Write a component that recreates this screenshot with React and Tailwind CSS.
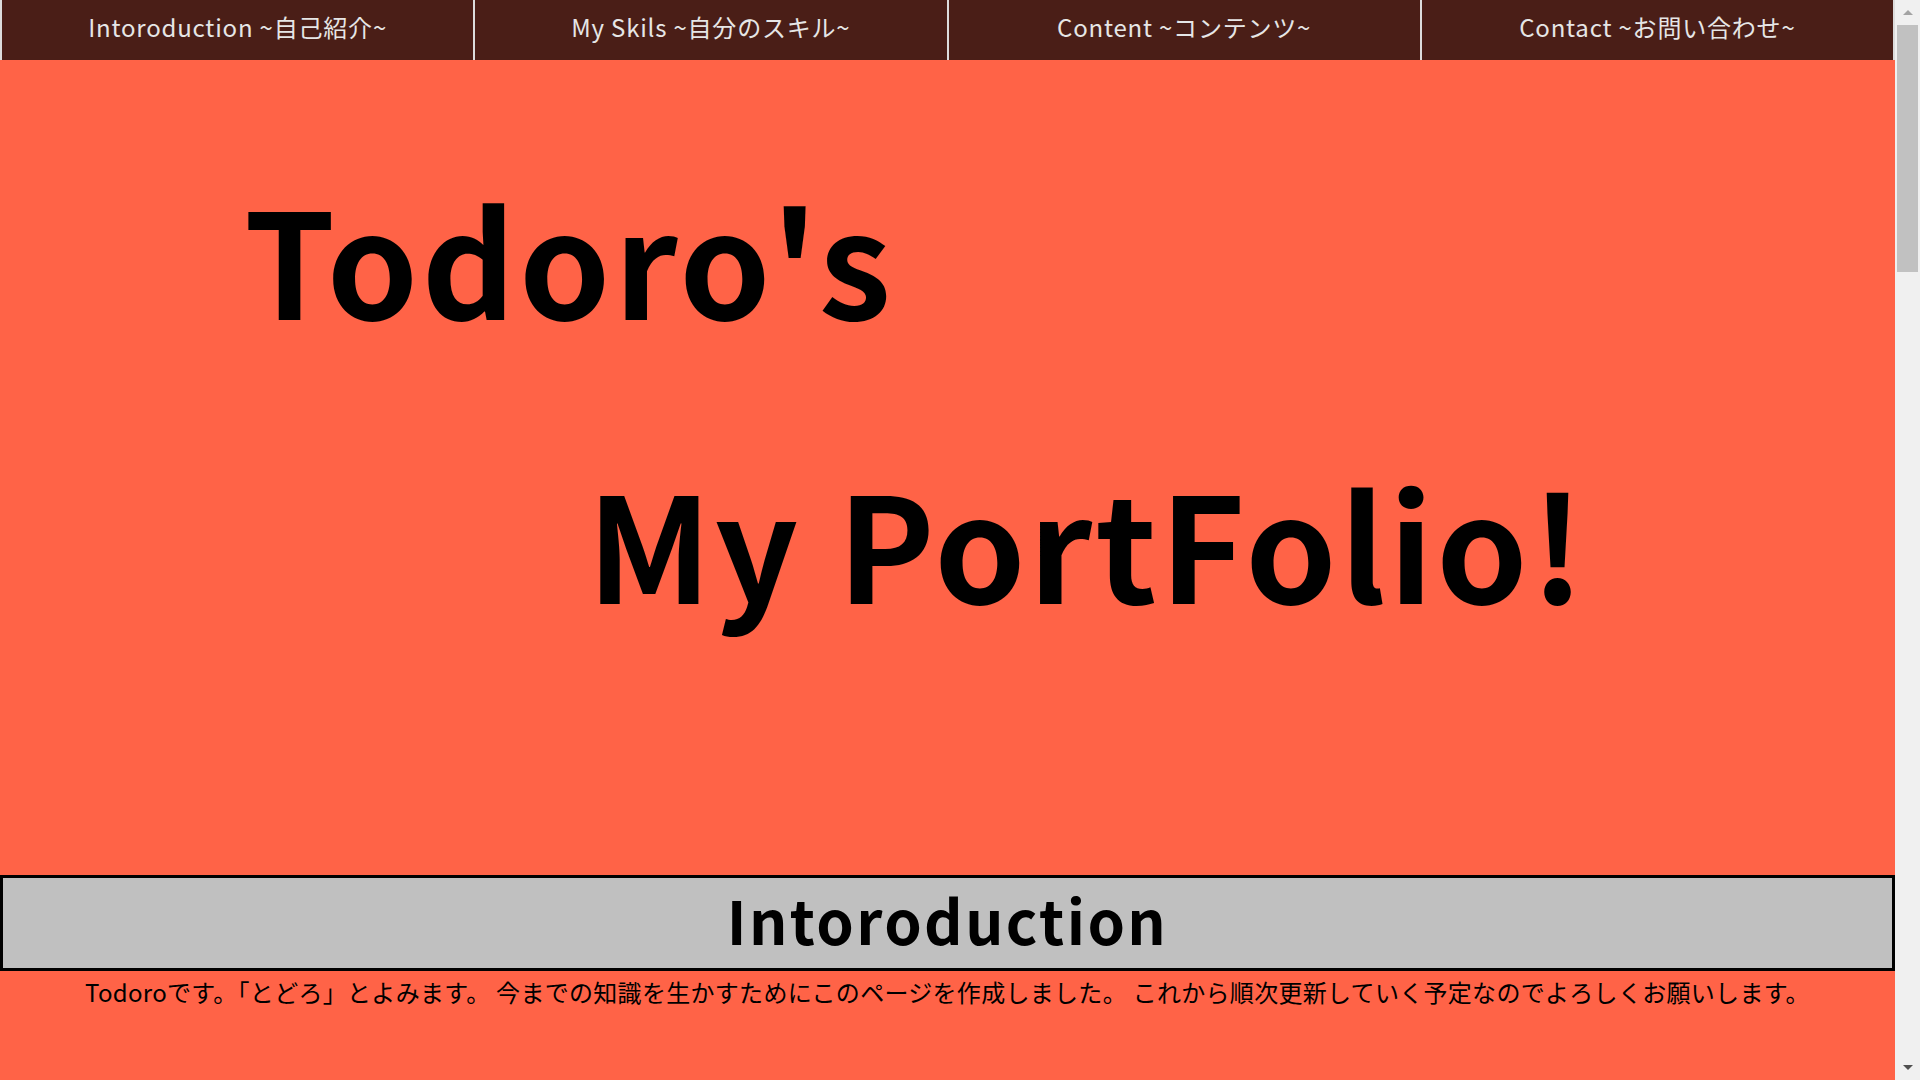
import React from "react";

const navItems = [
  "Intoroduction ~自己紹介~",
  "My Skils ~自分のスキル~",
  "Content ~コンテンツ~",
  "Contact ~お問い合わせ~",
];

export default function App() {
  return (
    <div
      className="flex h-screen w-full overflow-hidden bg-[#ff6347]"
      style={{ fontFamily: '"Noto Sans CJK JP", "Noto Sans", sans-serif' }}
    >
      <div className="flex-1 flex flex-col bg-[#ff6347] text-black">
        <nav className="flex h-[60px] bg-[#4a1e17]">
          {navItems.map((t, i) => (
            <div
              key={i}
              className={`flex-1 flex items-center justify-center border-l-2 border-[#dcdcdc] text-[24px] tracking-[0.8px] text-[#e6e6e6] pb-[6px] ${
                i === 3 ? "border-r-2" : ""
              }`}
            >
              {t}
            </div>
          ))}
        </nav>
        <section className="h-[815px] flex flex-col pt-[124px]">
          <h1 className="text-[146px] font-bold leading-none tracking-[3.5px] pl-[244px]">Todoro's</h1>
          <h1 className="text-[146px] font-bold leading-none tracking-[3px] pl-[587px] mt-[138px]">My PortFolio!</h1>
        </section>
        <h2 className="h-[96px] border-[3px] border-black bg-[#c0c0c0] flex items-center justify-center text-[60px] font-bold leading-none tracking-[2.4px] pb-[8px]">
          Intoroduction
        </h2>
        <p className="text-center text-[24px] leading-[40px] tracking-[0.3px] mt-[1px]">
          Todoroです。「とどろ」とよみます。 今までの知識を生かすためにこのページを作成しました。 これから順次更新していく予定なのでよろしくお願いします。
        </p>
      </div>
      <div className="w-[25px] bg-[#f0f0f0] flex flex-col items-center relative">
        <div className="mt-[10px] w-0 h-0 border-l-[5px] border-r-[5px] border-b-[5px] border-l-transparent border-r-transparent border-b-[#a3a3a3]" />
        <div className="mt-[10px] w-[21px] h-[247px] bg-[#c1c1c1]" />
        <div className="absolute bottom-[10px] w-0 h-0 border-l-[5px] border-r-[5px] border-t-[5px] border-l-transparent border-r-transparent border-t-[#505050]" />
      </div>
    </div>
  );
}
